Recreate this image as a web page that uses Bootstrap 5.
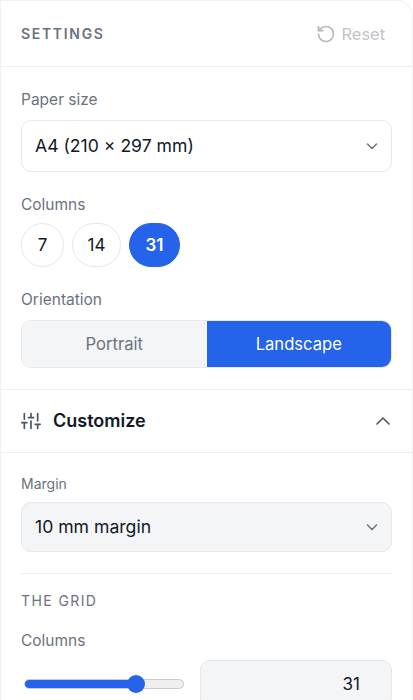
<!DOCTYPE html>
<html lang="en">
<head>
<meta charset="utf-8">
<title>Settings</title>
<link href="https://cdn.jsdelivr.net/npm/bootstrap@5.3.0/dist/css/bootstrap.min.css" rel="stylesheet">
<style>
html,body{height:700px;overflow:hidden;background:#fff}
body{font-family:Inter,"Liberation Sans",sans-serif;color:#111827}
.panel{border:1px solid #f0f1f3;border-bottom:0;border-radius:0 16px 0 0;background:#fff;width:413px;height:720px}
.panel-head{height:66px;padding:0 20px;border-bottom:1px solid #eceef1}
.panel-title{font-size:14px;font-weight:600;letter-spacing:1.68px;color:#6b7280;margin:0;padding-top:2px}
.reset-link{font-size:16.4px;color:#c0c4cb;background:none;border:0;padding:1px 7px 0 0;gap:6px}
.sect{padding:22px 20px 0}
.sect.tight{padding-top:20px}
.field-label{font-size:15.5px;line-height:20px;color:#6b7280;padding-top:1px;margin:0 0 10px;display:block}
.field-label.gap-s{margin-bottom:8px}
.field-label.gap-m{margin-bottom:9px}
.field-label.small-t{font-size:14px}
.after{margin-top:22px}
.pick{height:52px;border:1px solid #e5e7eb;border-radius:10px;padding:0 13px;font-size:17.6px;color:#111827;background-color:#fff;appearance:none;width:100%;
 background-image:url("data:image/svg+xml,%3Csvg xmlns='http://www.w3.org/2000/svg' viewBox='0 0 16 16'%3E%3Cpath d='M3.5 6l4.5 4.5L12.5 6' fill='none' stroke='%236b7280' stroke-width='1.5' stroke-linecap='round' stroke-linejoin='round'/%3E%3C/svg%3E");
 background-repeat:no-repeat;background-size:16px 16px;background-position:right 11px center}
.pick.soft{height:50px;background-color:#f4f5f7}
.pill-opt{height:44px;width:49px;padding:0;border:1px solid #e5e7eb;border-radius:22px;font-size:17px;background:#fff;color:#111827;line-height:1}
.pill-opt.one{width:43px}
.pill-opt.on{width:51px;background:#2563eb;border-color:#2563eb;color:#fff;font-weight:600}
.seg{height:48px;border:1px solid #e5e7eb;border-radius:10px;overflow:hidden}
.seg-btn{flex:1 1 0;border:0;background:#f4f5f7;color:#6b7280;font-size:16.6px;padding:0}
.seg-btn.on{background:#2563eb;color:#fff}
.cust-head{height:64px;padding:0 20px;border-top:1px solid #eceef1;border-bottom:1px solid #eceef1;margin-top:21px}
.cust-title{font-size:18px;font-weight:600;color:#111827;margin:0}
.chev-up{margin-right:1px}
.rule{height:1px;background:#eceef1;margin:21px 0 0}
.grid-title{font-size:14px;letter-spacing:1.4px;color:#6b7280;line-height:20px;padding-top:1px;margin:16px 0 19px}
.slide{appearance:none;-webkit-appearance:none;background:none;width:160px;height:20px;margin:0 0 0 3px;flex:none}
.slide::-webkit-slider-runnable-track{height:10px;border-radius:5px;border:1px solid #c9cbd0;background:linear-gradient(90deg,#2563eb 112px,#efefef 112px)}
.slide::-webkit-slider-thumb{-webkit-appearance:none;appearance:none;width:18px;height:18px;border-radius:50%;background:#2563eb;border:0;margin-top:-5px}
.num{width:192px;height:48px;border:1px solid #e5e7eb;border-radius:10px;background:#f4f5f7;font-size:17px;padding:0 31px;text-align:right;color:#111827}
</style>
</head>
<body>
<div class="panel">
  <div class="panel-head d-flex align-items-center justify-content-between">
    <h2 class="panel-title">SETTINGS</h2>
    <button class="reset-link d-flex align-items-center" type="button">
      <svg width="20" height="20" viewBox="0 0 24 24" fill="none" stroke="#b4b8c0" stroke-width="2" stroke-linecap="round" stroke-linejoin="round" aria-hidden="true"><path d="M3 12a9 9 0 1 0 9-9 9.75 9.75 0 0 0-6.74 2.74L3 8"/><path d="M3 3v5h5"/></svg>
      Reset
    </button>
  </div>
  <div class="sect">
    <label class="field-label">Paper size</label>
    <select class="pick d-block"><option>A4 (210 × 297 mm)</option></select>
    <label class="field-label gap-s after">Columns</label>
    <div class="d-flex gap-2">
      <button class="pill-opt one" type="button">7</button>
      <button class="pill-opt" type="button">14</button>
      <button class="pill-opt on" type="button">31</button>
    </div>
    <label class="field-label after">Orientation</label>
    <div class="seg d-flex">
      <button class="seg-btn" type="button">Portrait</button>
      <button class="seg-btn on" type="button">Landscape</button>
    </div>
  </div>
  <div class="cust-head d-flex align-items-center justify-content-between">
    <div class="d-flex align-items-center gap-2">
      <svg width="20" height="20" viewBox="0 0 24 24" fill="none" stroke="#4b5563" stroke-width="2" stroke-linecap="round" aria-hidden="true"><path d="M4 21v-7M4 10V3M12 21v-9M12 8V3M20 21v-5M20 12V3M1 14h6M9 8h6M17 16h6"/></svg>
      <h3 class="cust-title ms-1">Customize</h3>
    </div>
    <svg class="chev-up" width="16" height="16" viewBox="4 4 16 16" fill="none" stroke="#4b5563" stroke-width="1.6" stroke-linecap="round" stroke-linejoin="round" aria-hidden="true"><path d="m18 15-6-6-6 6"/></svg>
  </div>
  <div class="sect tight">
    <label class="field-label gap-s small-t">Margin</label>
    <select class="pick soft d-block"><option>10 mm margin</option></select>
    <div class="rule"></div>
    <div class="grid-title">THE GRID</div>
    <label class="field-label gap-m">Columns</label>
    <div class="d-flex align-items-center justify-content-between">
      <input class="slide" type="range" min="1" max="42" value="31">
      <input class="num" type="text" value="31">
    </div>
  </div>
</div>
</body>
</html>
